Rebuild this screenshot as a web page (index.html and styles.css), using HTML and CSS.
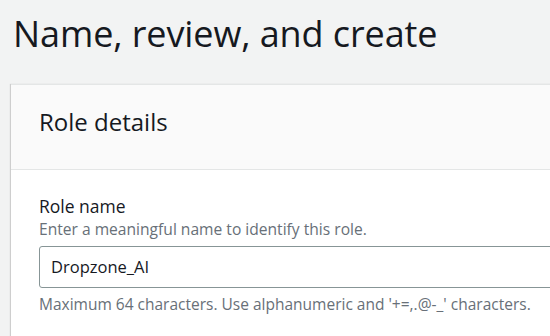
FILE: index.html
```html
<!DOCTYPE html>
<html>
<head>
<meta charset="utf-8">
<link rel="stylesheet" href="styles.css">
</head>
<body>
<div class="page">
  <h1 class="title">Name, review, and create</h1>
  <section class="card">
    <header class="card-header">
      <h2 class="card-title">Role details</h2>
    </header>
    <div class="card-body">
      <div class="field">
        <label class="label">Role name</label>
        <div class="desc">Enter a meaningful name to identify this role.</div>
        <div class="input">Dropzone_AI</div>
        <div class="constraint">Maximum 64 characters. Use alphanumeric and '+=,.@-_' characters.</div>
      </div>
    </div>
  </section>
</div>
</body>
</html>
```
FILE: styles.css
```css
html, body {
  margin: 0;
  padding: 0;
  background: #f2f3f3;
  font-family: "Open Sans", "Noto Sans", sans-serif;
  color: #16191f;
  overflow: hidden;
}
.page {
  padding: 9px 0 0 11px;
  width: 700px;
}
.title {
  margin: 0 0 0 2px;
  font-size: 36px;
  font-weight: 500;
  line-height: 50px;
  letter-spacing: -0.1px;
}
.card {
  margin-top: 25px;
  background: #fff;
  border-top: 1px solid #e4e6e6;
  box-shadow: -1px 0 1px rgba(0,0,0,0.15);
}
.card-header {
  background: #fafafa;
  border-bottom: 1px solid #e4e6e6;
  padding: 20px 28px 0 28px;
  height: 64px;
}
.card-title {
  margin: 0;
  font-size: 24px;
  font-weight: 400;
  line-height: 34px;
}
.card-body {
  padding: 24px 28px 40px 28px;
}
.label {
  display: block;
  font-size: 17.5px;
  line-height: 24px;
}
.desc {
  font-size: 15.6px;
  line-height: 22px;
  color: #687078;
}
.input {
  margin-top: 6px;
  height: 42px;
  border: 1px solid #879596;
  border-radius: 3px;
  box-sizing: border-box;
  padding: 0 11px;
  font-size: 16.5px;
  line-height: 40px;
  background: #fff;
}
.constraint {
  margin-top: 5px;
  font-size: 15.5px;
  line-height: 22px;
  color: #687078;
}
```
